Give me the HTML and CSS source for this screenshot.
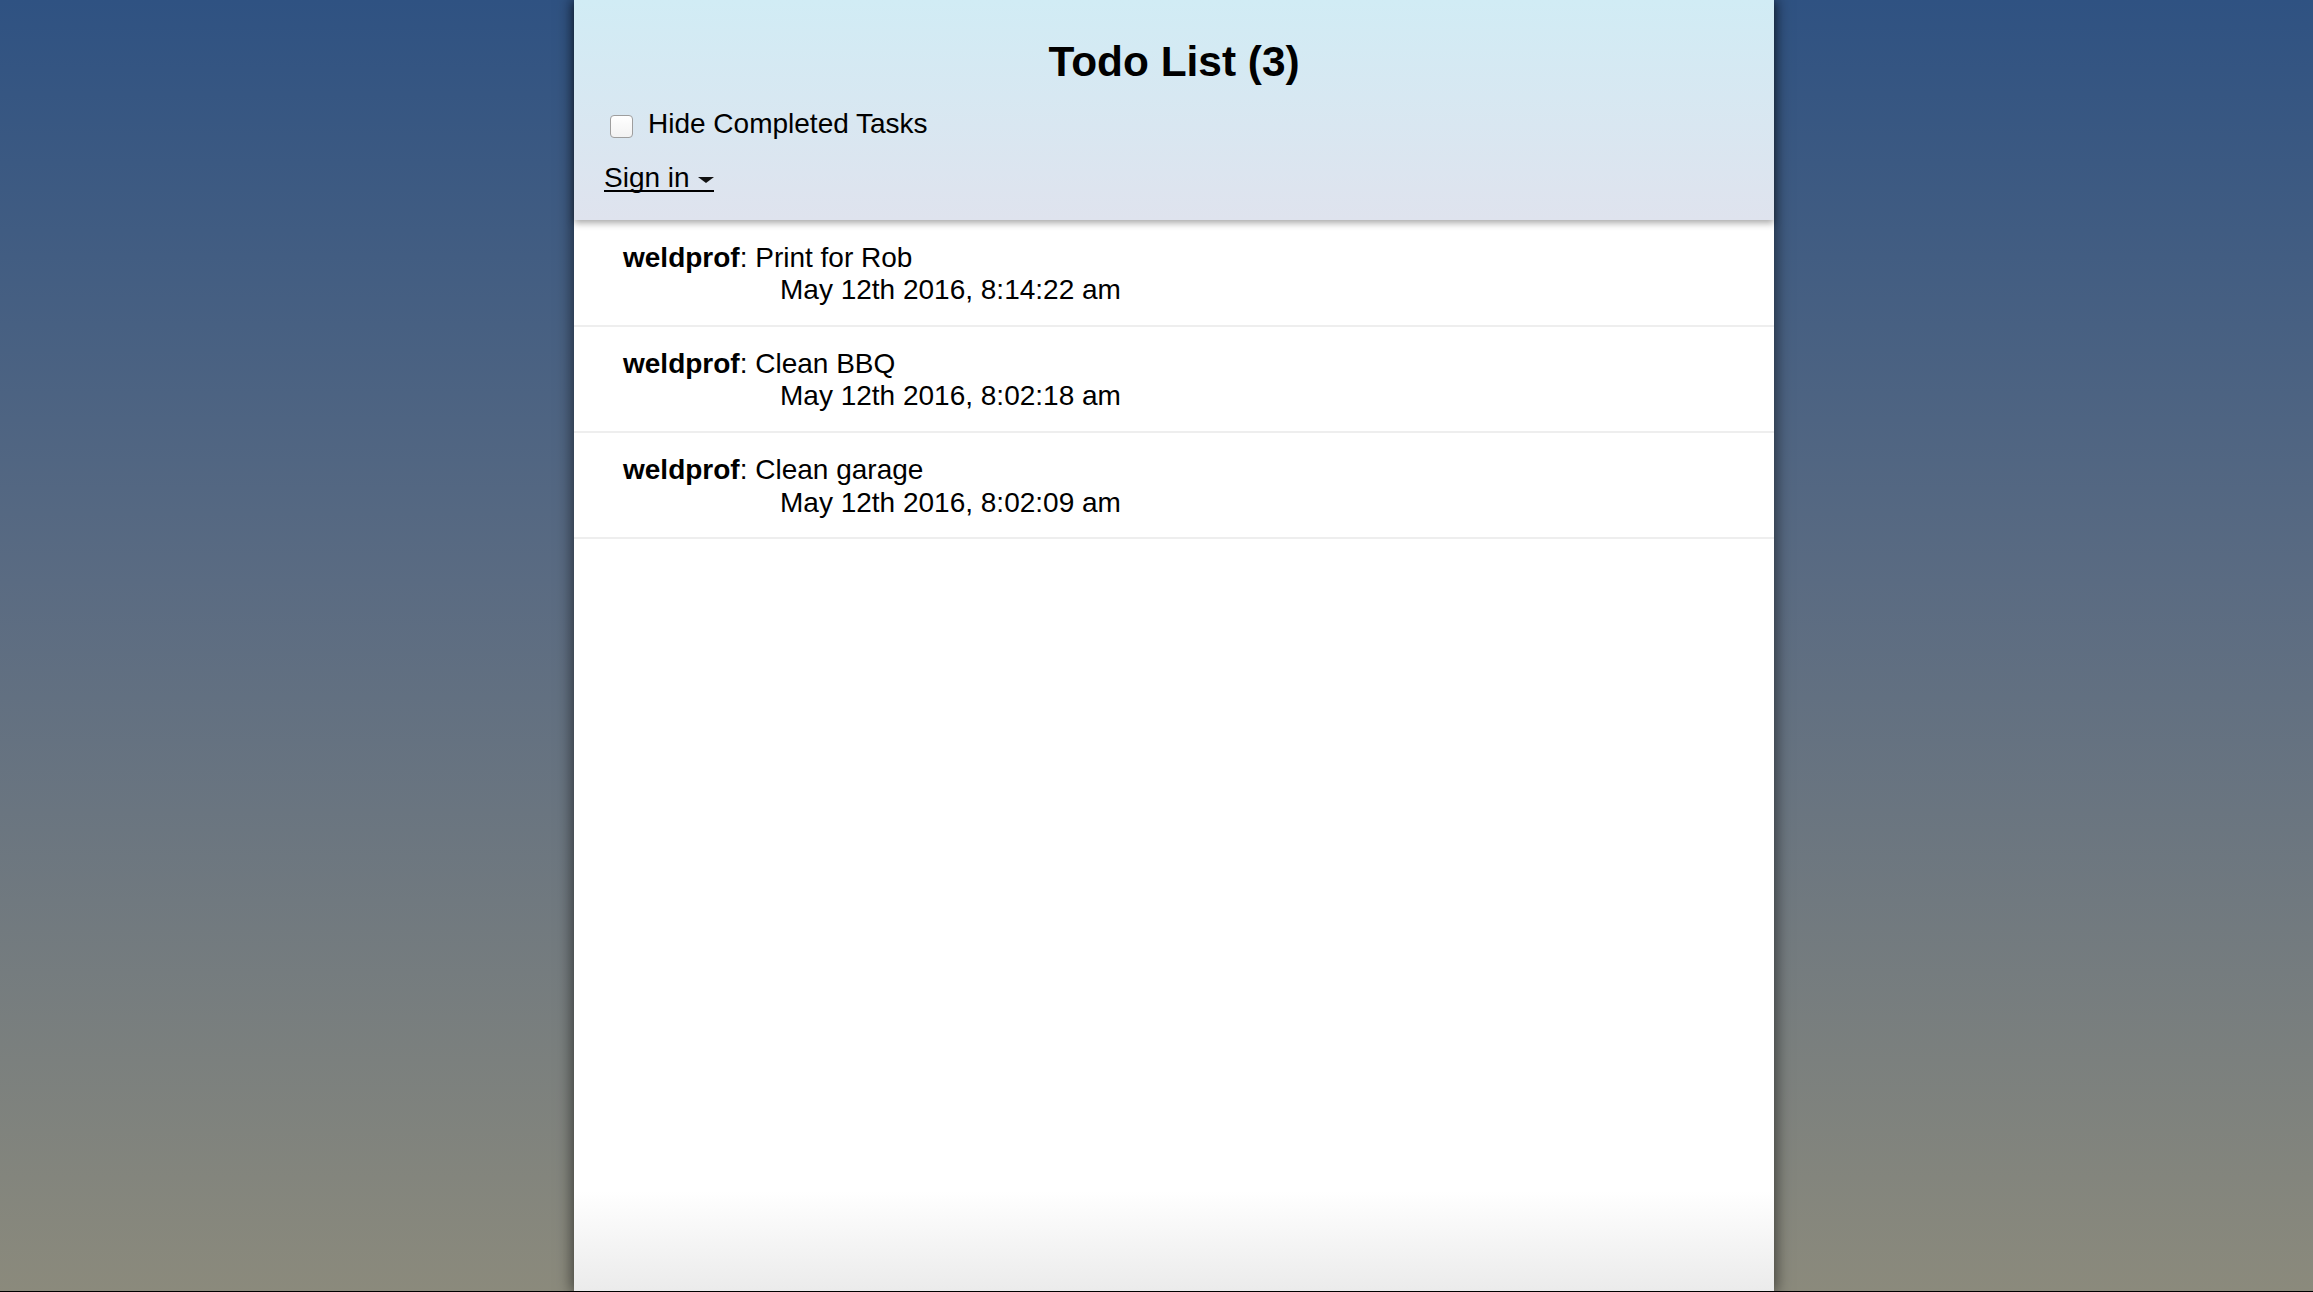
FILE: index.html
```html
<!DOCTYPE html>
<html>
<head>
<meta charset="utf-8">
<title>Todo List</title>
<link rel="stylesheet" href="styles.css">
</head>
<body>
  <div class="app">
    <header class="app-header">
      <h1 class="title">Todo List (3)</h1>
      <label class="hide-completed">
        <input type="checkbox" class="hide-box">
        <span>Hide Completed Tasks</span>
      </label>
      <div class="login-row">
        <a class="signin" href="#">
          <span>Sign in</span>
          <span class="caret"></span>
        </a>
      </div>
    </header>
    <ul class="tasks">
      <li class="task">
        <div class="task-line"><strong>weldprof</strong>: Print for Rob</div>
        <div class="task-date">May 12th 2016, 8:14:22 am</div>
      </li>
      <li class="task">
        <div class="task-line"><strong>weldprof</strong>: Clean BBQ</div>
        <div class="task-date">May 12th 2016, 8:02:18 am</div>
      </li>
      <li class="task">
        <div class="task-line"><strong>weldprof</strong>: Clean garage</div>
        <div class="task-date">May 12th 2016, 8:02:09 am</div>
      </li>
    </ul>
  </div>
</body>
</html>
```

FILE: styles.css
```css
html {
  height: 100%;
  background: linear-gradient(to bottom, #2f5282 0%, #5a6b82 45%, #8b8a7c 100%);
}

body {
  margin: 0;
  height: 100vh;
  box-sizing: border-box;
  border-bottom: 1px solid #000;
  padding-left: 35px;
  display: flex;
  justify-content: center;
  font-family: "Liberation Sans", Arial, Helvetica, sans-serif;
  font-size: 28px;
  color: #000;
}

.app {
  width: 1200px;
  height: 100%;
  display: flex;
  flex-direction: column;
  background: linear-gradient(to bottom, #ffffff 0%, #ffffff calc(100% - 100px), #ebebeb 100%);
  box-shadow: 0 0 14px 2px rgba(0, 0, 0, 0.55);
}

.app-header {
  position: relative;
  z-index: 1;
  padding: 39px 30px 28.5px;
  background: linear-gradient(to bottom, #d1ecf5 0%, #dfe3ee 100%);
  box-shadow: 0 3px 7px rgba(0, 0, 0, 0.35);
}

.title {
  margin: 0 0 23px;
  font-size: 42.4px;
  line-height: 46px;
  font-weight: bold;
  text-align: center;
}

.hide-completed {
  display: flex;
  align-items: center;
  gap: 15px;
  margin-left: 6px;
  line-height: 32.4px;
}

.hide-box {
  appearance: none;
  -webkit-appearance: none;
  width: 23px;
  height: 23px;
  margin: 3.6px 0 0;
  box-sizing: border-box;
  border: 1px solid #9e9e9e;
  border-radius: 4px;
  background: linear-gradient(to bottom, #ffffff, #f2f2f2);
}

.login-row {
  display: flex;
  margin-top: 24.5px;
}

.signin {
  display: flex;
  align-items: center;
  gap: 8px;
  color: #000;
  text-decoration: none;
  line-height: 25px;
  border-bottom: 2px solid #000;
}

.caret {
  width: 0;
  height: 0;
  margin-top: 5px;
  border-left: 8px solid transparent;
  border-right: 8px solid transparent;
  border-top: 6px solid #111;
}

.tasks {
  list-style: none;
  margin: 0;
  padding: 0;
}

.task {
  padding: 21.25px 49px 18.25px;
  border-bottom: 2px solid #eeeeee;
  line-height: 32.4px;
}

.task strong {
  font-weight: bold;
}

.task-date {
  padding-left: 157px;
}
```
